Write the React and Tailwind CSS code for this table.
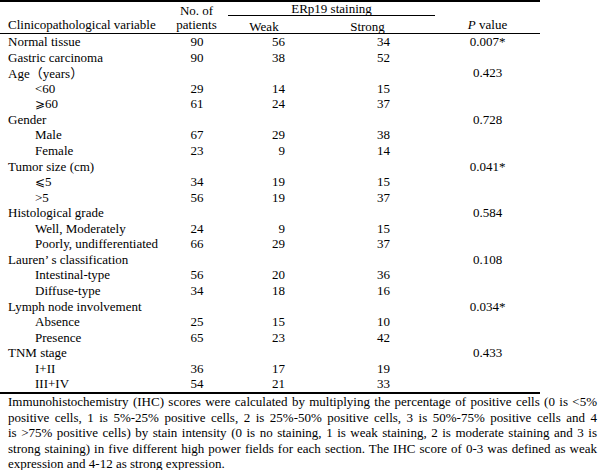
import React from "react";

const rows = [
  { label: "Normal tissue", n: "90", w: "56", s: "34", p: "0.007*" },
  { label: "Gastric carcinoma", n: "90", w: "38", s: "52" },
  { label: "age", p: "0.423" },
  { label: "<60", sub: true, n: "29", w: "14", s: "15" },
  { label: "ge60", sub: true, n: "61", w: "24", s: "37" },
  { label: "Gender", p: "0.728" },
  { label: "Male", sub: true, n: "67", w: "29", s: "38" },
  { label: "Female", sub: true, n: "23", w: "9", s: "14" },
  { label: "Tumor size (cm)", p: "0.041*" },
  { label: "le5", sub: true, n: "34", w: "19", s: "15" },
  { label: ">5", sub: true, n: "56", w: "19", s: "37" },
  { label: "Histological grade", p: "0.584" },
  { label: "Well, Moderately", sub: true, n: "24", w: "9", s: "15" },
  { label: "Poorly, undifferentiated", sub: true, n: "66", w: "29", s: "37" },
  { label: "Lauren’ s classification", p: "0.108" },
  { label: "Intestinal-type", sub: true, n: "56", w: "20", s: "36" },
  { label: "Diffuse-type", sub: true, n: "34", w: "18", s: "16" },
  { label: "Lymph node involvement", p: "0.034*" },
  { label: "Absence", sub: true, n: "25", w: "15", s: "10" },
  { label: "Presence", sub: true, n: "65", w: "23", s: "42" },
  { label: "TNM stage", p: "0.433" },
  { label: "I+II", sub: true, n: "36", w: "17", s: "19" },
  { label: "III+IV", sub: true, n: "54", w: "21", s: "33" },
];

function Label({ label }) {
  if (label === "age")
    return (
      <span>
        Age<span className="[font-family:'Noto_Sans_CJK_SC',sans-serif]">（</span>years
        <span className="[font-family:'Noto_Sans_CJK_SC',sans-serif]">）</span>
      </span>
    );
  if (label === "ge60")
    return (
      <span>
        <span className="[font-family:'DejaVu_Serif',serif] text-[12px]">⩾</span>60
      </span>
    );
  if (label === "le5")
    return (
      <span>
        <span className="[font-family:'DejaVu_Serif',serif] text-[12px]">⩽</span>5
      </span>
    );
  return <span>{label}</span>;
}

const foot = [
  "Immunohistochemistry (IHC) scores were calculated by multiplying the percentage of positive cells (0 is <5%",
  "positive cells, 1 is 5%-25% positive cells, 2 is 25%-50% positive cells, 3 is 50%-75% positive cells and 4",
  "is >75% positive cells) by stain intensity (0 is no staining, 1 is weak staining, 2 is moderate staining and 3 is",
  "strong staining) in five different high power fields for each section. The IHC score of 0-3 was defined as weak",
];

export default function App() {
  return (
    <div className="w-[600px] h-[470px] overflow-hidden bg-white text-black [font-family:'Liberation_Serif','Noto_Sans_CJK_SC',serif] text-[13px]">
      <div className="w-[540px] border-t-2 border-black">
        {/* header */}
        <div className="grid grid-cols-[165px_63px_72px_135px_105px] grid-rows-[14px_17px] border-b border-black">
          <div className="row-span-2 flex items-end pl-2 pb-[1px] leading-[14px] whitespace-nowrap">
            Clinicopathological variable
          </div>
          <div className="row-span-2 flex flex-col items-center pt-[2px] leading-[14px] whitespace-nowrap">
            <span>No. of</span>
            <span>patients</span>
          </div>
          <div className="col-span-2 border-b border-black text-center leading-[13px]">ERp19 staining</div>
          <div className="row-span-2 flex items-end justify-center pb-[1px] leading-[14px]">
            <span>
              <i>P</i> value
            </span>
          </div>
          <div className="text-center leading-[15px] pt-[3px]">Weak</div>
          <div className="text-center leading-[15px] pt-[3px]">Strong</div>
        </div>
        {/* body */}
        <div className="border-b-2 border-black">
          {rows.map((r, i) => (
            <div key={i} className="grid grid-cols-[165px_63px_72px_135px_105px] h-[15.57px] leading-[15.57px] whitespace-nowrap">
              <div className={r.sub ? "pl-[35px]" : "pl-2"}>
                <Label label={r.label} />
              </div>
              <div className="text-center pl-[1px]">{r.n || ""}</div>
              <div className="text-right pr-[15px]">{r.w || ""}</div>
              <div className="pl-[77px]">{r.s || ""}</div>
              <div className="text-center">{r.p || ""}</div>
            </div>
          ))}
        </div>
      </div>
      <div className="w-[597px] pl-2 leading-[15.6px]">
        {foot.map((l, i) => (
          <div key={i} className="text-justify [text-align-last:justify] whitespace-nowrap">
            {l}
          </div>
        ))}
        <div>expression and 4-12 as strong expression.</div>
      </div>
    </div>
  );
}
